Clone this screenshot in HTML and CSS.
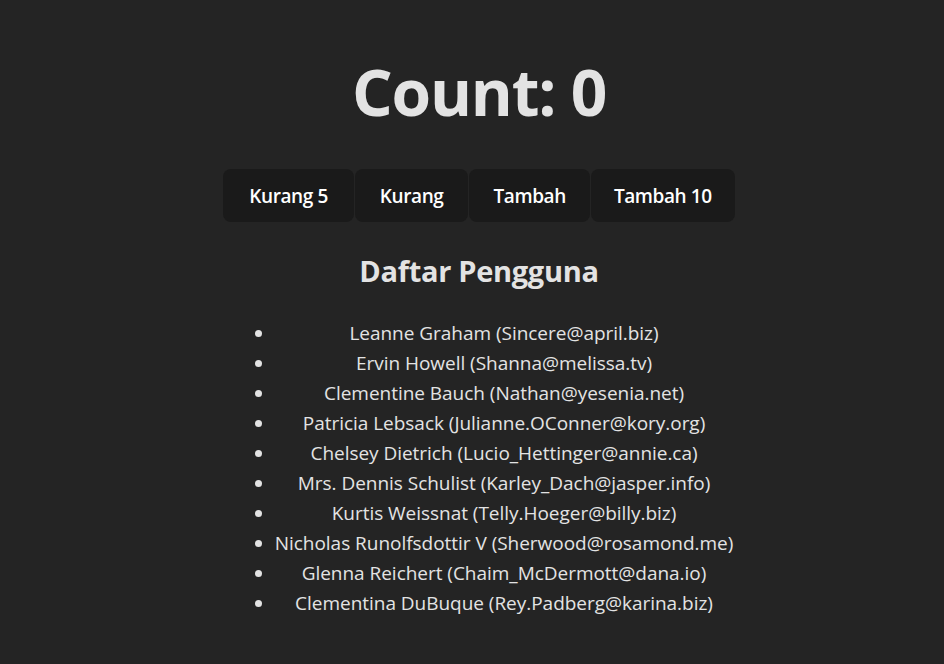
FILE: index.html
```html
<!DOCTYPE html>
<html lang="id">
<head>
<meta charset="utf-8">
<title>Counter</title>
<link rel="stylesheet" href="styles.css">
</head>
<body>
<div class="app">
  <h1 class="count">Count: 0</h1>
  <div class="buttons">
    <button class="btn">Kurang 5</button>
    <button class="btn">Kurang</button>
    <button class="btn">Tambah</button>
    <button class="btn">Tambah 10</button>
  </div>
  <h2 class="title">Daftar Pengguna</h2>
  <ul class="users">
    <li>Leanne Graham (Sincere@april.biz)</li>
    <li>Ervin Howell (Shanna@melissa.tv)</li>
    <li>Clementine Bauch (Nathan@yesenia.net)</li>
    <li>Patricia Lebsack (Julianne.OConner@kory.org)</li>
    <li>Chelsey Dietrich (Lucio_Hettinger@annie.ca)</li>
    <li>Mrs. Dennis Schulist (Karley_Dach@jasper.info)</li>
    <li>Kurtis Weissnat (Telly.Hoeger@billy.biz)</li>
    <li>Nicholas Runolfsdottir V (Sherwood@rosamond.me)</li>
    <li>Glenna Reichert (Chaim_McDermott@dana.io)</li>
    <li>Clementina DuBuque (Rey.Padberg@karina.biz)</li>
  </ul>
</div>
</body>
</html>
```
FILE: styles.css
```css
html, body {
  margin: 0;
  padding: 0;
}
body {
  background: #242424;
  color: #e3e3e3;
  font-family: "Open Sans", "Noto Sans", sans-serif;
  min-height: 664px;
}
.app {
  display: flex;
  flex-direction: column;
  align-items: center;
  padding-top: 57px;
  padding-left: 14px;
}
.count {
  margin: 0;
  font-size: 64px;
  line-height: 70px;
  font-weight: 700;
  letter-spacing: -1.2px;
}
.buttons {
  display: flex;
  gap: 1px;
  margin-top: 42px;
}
.btn {
  font-family: inherit;
  font-size: 19px;
  font-weight: 600;
  line-height: 27px;
  padding: 13px 24px 11px;
  border: 1px solid transparent;
  border-radius: 8px;
  background: #1a1a1a;
  color: #ffffff;
  letter-spacing: -0.4px;
  cursor: pointer;
}
.btn:first-child {
  padding-left: 25px;
  padding-right: 25px;
}
.btn:nth-child(3) {
  padding-left: 23px;
  padding-right: 23px;
}
.btn:last-child {
  padding-left: 22px;
  padding-right: 22px;
}
.title {
  margin: 31px 0 0;
  font-size: 29px;
  line-height: 36px;
  font-weight: 700;
  letter-spacing: -0.3px;
}
.users {
  margin: 29px 0 0 10px;
  padding: 0 0 0 40px;
  list-style: disc;
  text-align: center;
  font-size: 19px;
  line-height: 30px;
  letter-spacing: -0.03px;
}
```
